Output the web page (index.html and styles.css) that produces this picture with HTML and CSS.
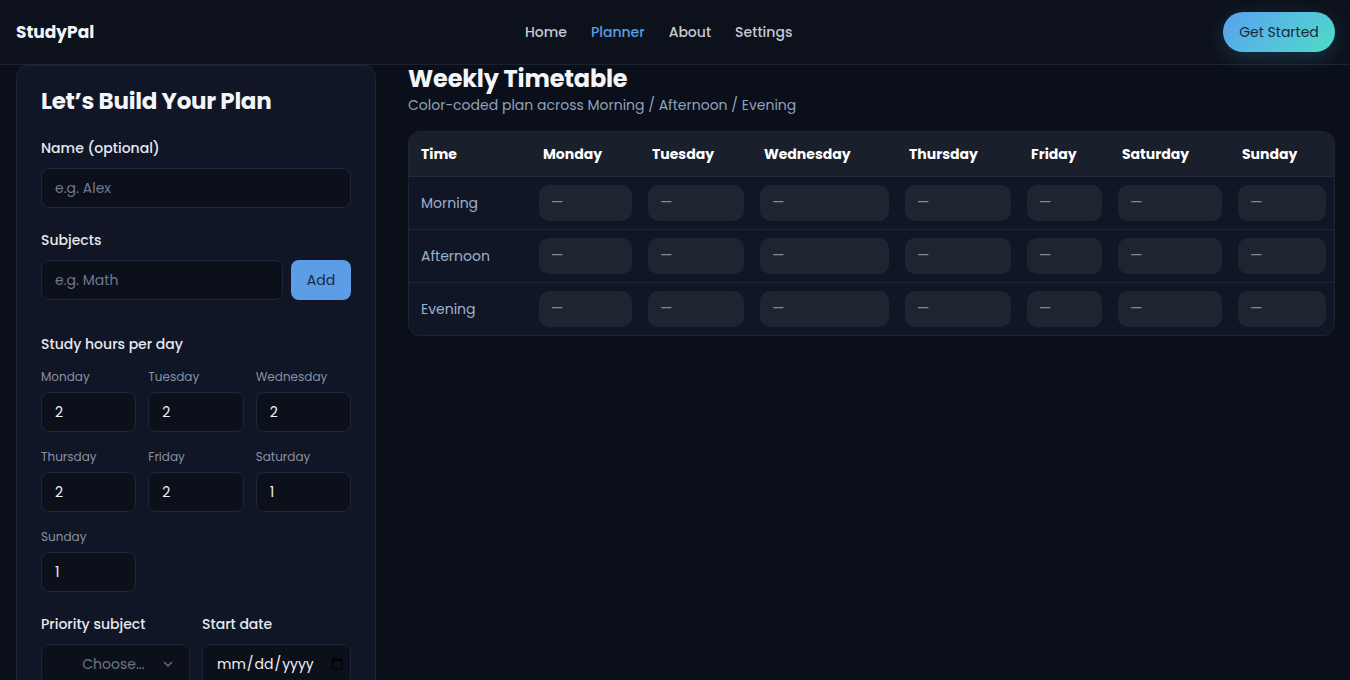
FILE: index.html
```html
<!DOCTYPE html>
<html lang="en">
<head>
<meta charset="utf-8">
<title>StudyPal</title>
<link rel="stylesheet" href="styles.css">
</head>
<body>
<header class="topbar">
  <div class="logo">StudyPal</div>
  <nav class="nav">
    <a class="nav-link" href="#">Home</a>
    <a class="nav-link active" href="#">Planner</a>
    <a class="nav-link" href="#">About</a>
    <a class="nav-link" href="#">Settings</a>
  </nav>
  <button class="cta">Get Started</button>
</header>

<main class="layout">
  <section class="form-card">
    <h1 class="form-title">Let’s Build Your Plan</h1>

    <div class="field">
      <label class="label">Name (optional)</label>
      <input class="input" type="text" placeholder="e.g. Alex">
    </div>

    <div class="field">
      <label class="label">Subjects</label>
      <div class="subject-row">
        <input class="input" type="text" placeholder="e.g. Math">
        <button class="add-btn">Add</button>
      </div>
    </div>

    <div class="field field-hours">
      <label class="label">Study hours per day</label>
      <div class="days">
        <div class="day"><span class="day-label">Monday</span><input class="input" type="number" value="2"></div>
        <div class="day"><span class="day-label">Tuesday</span><input class="input" type="number" value="2"></div>
        <div class="day"><span class="day-label">Wednesday</span><input class="input" type="number" value="2"></div>
        <div class="day"><span class="day-label">Thursday</span><input class="input" type="number" value="2"></div>
        <div class="day"><span class="day-label">Friday</span><input class="input" type="number" value="2"></div>
        <div class="day"><span class="day-label">Saturday</span><input class="input" type="number" value="1"></div>
        <div class="day"><span class="day-label">Sunday</span><input class="input" type="number" value="1"></div>
      </div>
    </div>

    <div class="two-col">
      <div class="field">
        <label class="label">Priority subject</label>
        <div class="select-wrap">
          <select class="input select"><option>Choose...</option></select>
          <svg class="chev" width="12" height="12" viewBox="0 0 12 12"><path d="M2.5 4.5 L6 8 L9.5 4.5" fill="none" stroke="#6b7688" stroke-width="1.3" stroke-linecap="round" stroke-linejoin="round"/></svg>
        </div>
      </div>
      <div class="field">
        <label class="label">Start date</label>
        <input class="input date" type="date">
      </div>
    </div>
  </section>

  <section class="timetable">
    <h2 class="tt-title">Weekly Timetable</h2>
    <p class="tt-sub">Color-coded plan across Morning / Afternoon / Evening</p>
    <div class="table-wrap">
      <table class="table">
        <colgroup>
          <col class="c-time"><col class="c-mon"><col class="c-tue"><col class="c-wed"><col class="c-thu"><col class="c-fri"><col class="c-sat"><col class="c-sun">
        </colgroup>
        <thead>
          <tr><th>Time</th><th>Monday</th><th>Tuesday</th><th>Wednesday</th><th>Thursday</th><th>Friday</th><th>Saturday</th><th>Sunday</th></tr>
        </thead>
        <tbody>
          <tr><td class="slot">Morning</td><td><div class="cell">—</div></td><td><div class="cell">—</div></td><td><div class="cell">—</div></td><td><div class="cell">—</div></td><td><div class="cell">—</div></td><td><div class="cell">—</div></td><td><div class="cell">—</div></td></tr>
          <tr><td class="slot">Afternoon</td><td><div class="cell">—</div></td><td><div class="cell">—</div></td><td><div class="cell">—</div></td><td><div class="cell">—</div></td><td><div class="cell">—</div></td><td><div class="cell">—</div></td><td><div class="cell">—</div></td></tr>
          <tr><td class="slot">Evening</td><td><div class="cell">—</div></td><td><div class="cell">—</div></td><td><div class="cell">—</div></td><td><div class="cell">—</div></td><td><div class="cell">—</div></td><td><div class="cell">—</div></td><td><div class="cell">—</div></td></tr>
        </tbody>
      </table>
    </div>
  </section>
</main>
</body>
</html>
```

FILE: styles.css
```css
* { box-sizing: border-box; }

html, body {
  margin: 0;
  padding: 0;
  height: 100%;
  overflow: hidden;
}

body {
  background: #0b0f19;
  color: #e8ebf0;
  font-family: "Poppins", "Inter", "Open Sans", sans-serif;
  font-size: 14px;
}

.topbar {
  height: 65px;
  display: flex;
  align-items: center;
  justify-content: space-between;
  padding: 0 15px 0 16px;
  background: #0d111b;
  border-bottom: 1px solid #1c2230;
}

.logo {
  font-weight: 700;
  font-size: 17px;
  color: #f1f3f6;
}

.nav {
  display: flex;
  gap: 24px;
}

.nav-link {
  color: #c6cad2;
  text-decoration: none;
  font-size: 14px;
  font-weight: 500;
}

.nav-link.active { color: #5c9de2; }

.cta {
  height: 40px;
  width: 112px;
  border: none;
  border-radius: 20px;
  background: linear-gradient(135deg, #5b9fec 0%, #55bfe0 50%, #4edcc4 100%);
  color: #1b2638;
  font-family: inherit;
  font-size: 14px;
  box-shadow: 0 6px 22px rgba(70, 170, 220, 0.22);
}

.layout {
  display: grid;
  grid-template-columns: 360px 1fr;
  gap: 32px;
  padding: 0 15px 0 16px;
  align-items: start;
}

.form-card {
  background: #101626;
  border: 1px solid #1d2434;
  border-radius: 12px;
  padding: 18px 24px 24px;
}

.form-title {
  margin: 0 0 20px;
  font-size: 23px;
  font-weight: 700;
  line-height: 34px;
  color: #f3f5f8;
  letter-spacing: -0.3px;
}

.field { margin-bottom: 22px; }

.field-hours { margin-top: 34px; }

.label {
  display: block;
  font-size: 14px;
  font-weight: 500;
  line-height: 21px;
  color: #e6e9ee;
  margin-bottom: 9px;
}

.field-hours > .label { margin-bottom: 13px; }

.input {
  display: block;
  width: 100%;
  min-width: 0;
  height: 40px;
  border: 1px solid #1f2637;
  border-radius: 8px;
  background: #0c101b;
  color: #eef1f5;
  font-family: inherit;
  font-size: 14px;
  padding: 0 13px;
  outline: none;
}

.input::placeholder { color: #6c7a8f; }

.input::-webkit-outer-spin-button,
.input::-webkit-inner-spin-button { -webkit-appearance: none; margin: 0; }

.subject-row {
  display: flex;
  gap: 8px;
}

.subject-row .input { flex: 1; }

.add-btn {
  width: 60px;
  height: 40px;
  border: none;
  border-radius: 8px;
  background: #5c9de6;
  color: #1b2a44;
  font-family: inherit;
  font-size: 14px;
}

.days {
  display: grid;
  grid-template-columns: repeat(3, minmax(0, 1fr));
  column-gap: 12px;
  row-gap: 16px;
}

.day-label {
  display: block;
  font-size: 12px;
  line-height: 18px;
  color: #8792a4;
  margin-bottom: 6px;
}

.two-col {
  display: grid;
  grid-template-columns: minmax(0, 1fr) minmax(0, 1fr);
  gap: 12px;
}

.select-wrap { position: relative; }

.select {
  -webkit-appearance: none;
  appearance: none;
  color: #6b7587;
  text-align: center;
  padding-right: 28px;
  padding-left: 24px;
}

.chev {
  position: absolute;
  right: 16px;
  top: 14px;
  pointer-events: none;
}

.date { color: #eef1f5; padding-right: 4px; }

.timetable { min-width: 0; }

.tt-title {
  margin: 0;
  font-size: 24px;
  font-weight: 700;
  line-height: 28px;
  color: #f3f5f8;
  letter-spacing: -0.2px;
}

.tt-sub {
  margin: 0 0 14px;
  font-size: 14px;
  line-height: 24px;
  color: #8ea2bd;
}

.table-wrap {
  border: 1px solid #1d2434;
  border-radius: 12px;
  overflow: hidden;
  background: #101626;
}

.table {
  width: 100%;
  border-collapse: collapse;
  table-layout: fixed;
}

.c-time { width: 122px; }
.c-mon { width: 109px; }
.c-tue { width: 112px; }
.c-wed { width: 145px; }
.c-thu { width: 122px; }
.c-fri { width: 91px; }
.c-sat { width: 120px; }
.c-sun { width: 104px; }

.table th {
  background: #1a1f2c;
  text-align: left;
  font-size: 14px;
  font-weight: 700;
  color: #ffffff;
  height: 44px;
  padding: 2px 12px 0;
  border-bottom: 1px solid #242b3a;
}

.table td {
  padding: 8px;
  border-bottom: 1px solid #1f2636;
  height: 53px;
}

.table tbody tr:last-child td { border-bottom: none; }

.table td.slot {
  padding: 2px 12px 0;
  color: #9fb2cb;
  font-size: 14px;
}

.cell {
  height: 36px;
  border-radius: 10px;
  background: #1f2431;
  color: #7a8ca3;
  display: flex;
  align-items: center;
  padding: 0 12px;
  font-size: 14px;
}
```
